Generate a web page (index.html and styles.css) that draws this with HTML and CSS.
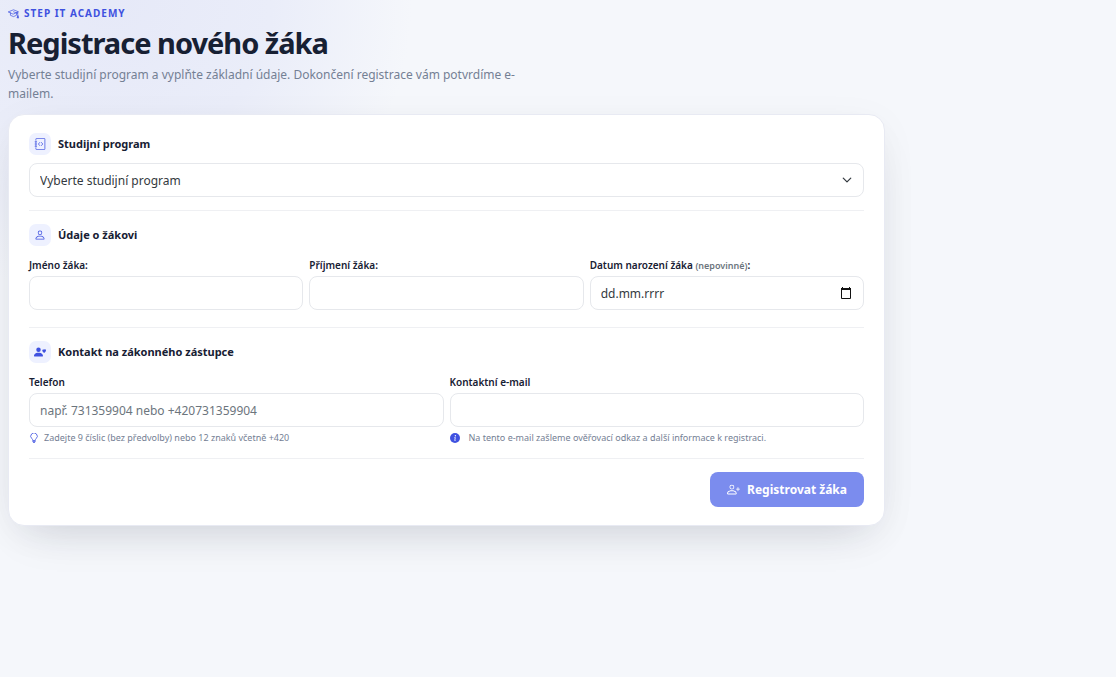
FILE: index.html
```html
<!DOCTYPE html>
<html lang="cs">
<head>
<meta charset="utf-8">
<meta name="viewport" content="width=device-width, initial-scale=1">
<title>Registrace nového žáka</title>
<link rel="stylesheet" href="styles.css">
</head>
<body>
<main class="page">
  <header class="intro">
    <p class="eyebrow">
      <svg class="eyebrow-icon" viewBox="0 0 16 16" fill="none" stroke="currentColor" stroke-linejoin="round" stroke-linecap="round" aria-hidden="true"><path d="M.8 5.5 8 2.6l7.200 2.900L8 8.700zM3.500 7v3.600L8 12.500l4.300-1.900V7M14.200 6v6M8 5.500l6 2.200"/><path d="M14.200 11.500l-1.200 2.800h2.400z" fill="currentColor"/></svg>
      STEP IT ACADEMY
    </p>
    <h1 class="title">Registrace nového žáka</h1>
    <p class="subtitle">Vyberte studijní program a vyplňte základní údaje. Dokončení registrace vám potvrdíme e-mailem.</p>
  </header>

  <form class="card">
    <section class="section section-program">
      <h2 class="section-title">
        <span class="badge"><svg viewBox="0 0 16 16" fill="none" stroke="currentColor" stroke-linecap="round" stroke-linejoin="round" aria-hidden="true"><path d="M2.500 3V1.500a1 1 0 0 1 1-1h10a1 1 0 0 1 1 1v13a1 1 0 0 1-1 1h-10a1 1 0 0 1-1-1V13M2.500 5.200v1M2.500 7.500v1M2.500 9.800v1M1.500 5h2M1.500 8h2M1.500 11h2M7.600 6 5.900 8l1.700 2M10 6l1.700 2L10 10"/></svg></span>
        <label for="program">Studijní program</label>
      </h2>
      <div class="select-wrap">
        <select class="control" id="program"><option>Vyberte studijní program</option></select>
        <svg class="chevron" viewBox="0 0 16 16" fill="none" stroke="currentColor" stroke-width="2" stroke-linecap="round" stroke-linejoin="round" aria-hidden="true"><path d="m2 5 6 6 6-6"/></svg>
      </div>
    </section>

    <section class="section section-student">
      <h2 class="section-title">
        <span class="badge"><svg viewBox="0 0 16 16" fill="currentColor" aria-hidden="true"><path d="M8 8a3 3 0 1 0 0-6 3 3 0 0 0 0 6m2-3a2 2 0 1 1-4 0 2 2 0 0 1 4 0m4 8c0 1-1 1-1 1H3s-1 0-1-1 1-4 6-4 6 3 6 4m-1-.004c-.001-.246-.154-.986-.832-1.664C11.516 10.680 10.289 10 8 10s-3.516.680-4.168 1.332c-.678.678-.830 1.418-.832 1.664z"/></svg></span>
        Údaje o žákovi
      </h2>
      <div class="fields fields-three">
        <div class="field">
          <label class="label" for="first">Jméno žáka:</label>
          <input class="control" id="first" type="text">
        </div>
        <div class="field">
          <label class="label" for="last">Příjmení žáka:</label>
          <input class="control" id="last" type="text">
        </div>
        <div class="field">
          <label class="label" for="birth">Datum narození žáka <span class="optional">(nepovinné)</span>:</label>
          <div class="control date">
            <input class="date-input" id="birth" type="text" placeholder="dd.mm.rrrr">
            <button class="date-button" type="button" aria-label="Otevřít kalendář">
              <svg viewBox="0 0 14 14" fill="none" stroke="currentColor" aria-hidden="true"><path d="M2.500 3v9.500h9V3"/><path d="M2 3h10" stroke-width="2"/><path d="M3.500 1v2M10.500 1v2"/></svg>
            </button>
          </div>
        </div>
      </div>
    </section>

    <section class="section section-contact">
      <h2 class="section-title">
        <span class="badge"><svg viewBox="0 0 16 16" fill="currentColor" aria-hidden="true"><path d="M9 5a3 3 0 1 1-6 0 3 3 0 0 1 6 0m-9 8c0 1 1 1 1 1h10s1 0 1-1-1-4-6-4-6 3-6 4m13.500-8.090c1.387-1.425 4.855 1.070 0 4.277-4.854-3.207-1.387-5.702 0-4.276Z"/></svg></span>
        Kontakt na zákonného zástupce
      </h2>
      <div class="fields">
        <div class="field">
          <label class="label" for="phone">Telefon</label>
          <input class="control" id="phone" type="tel" placeholder="např. 731359904 nebo +420731359904">
          <p class="hint">
            <svg class="hint-icon" viewBox="0 0 16 16" fill="none" stroke="currentColor" stroke-width="1.300" stroke-linecap="round" stroke-linejoin="round" aria-hidden="true"><path d="M6 11.500c0-1.200-.6-1.700-1.400-2.500a5.200 5.200 0 1 1 6.800 0c-.8.800-1.400 1.300-1.400 2.500zM6 13.400h4M7 15.300h2"/></svg>
            Zadejte 9 číslic (bez předvolby) nebo 12 znaků včetně +420
          </p>
        </div>
        <div class="field">
          <label class="label" for="email">Kontaktní e-mail</label>
          <input class="control" id="email" type="email">
          <p class="hint hint-info">
            <svg class="hint-icon" viewBox="0 0 16 16" aria-hidden="true"><circle cx="8" cy="8" r="8" fill="currentColor"/><circle cx="8.600" cy="4.300" r="1.100" fill="#fff"/><path d="M7 7.300h1.500L7.600 12h1.200" fill="none" stroke="#fff" stroke-width="1.300"/></svg>
            Na tento e-mail zašleme ověřovací odkaz a další informace k registraci.
          </p>
        </div>
      </div>
    </section>

    <div class="actions">
      <button class="submit" type="submit">
        <svg viewBox="0 0 16 16" fill="currentColor" aria-hidden="true"><path d="M6 8a3 3 0 1 0 0-6 3 3 0 0 0 0 6m2-3a2 2 0 1 1-4 0 2 2 0 0 1 4 0m4 8c0 1-1 1-1 1H1s-1 0-1-1 1-4 6-4 6 3 6 4m-1-.004c-.001-.246-.154-.986-.832-1.664C9.516 10.680 8.289 10 6 10s-3.516.680-4.168 1.332c-.678.678-.830 1.418-.832 1.664z"/><path d="M13.500 5a.5.5 0 0 1 .5.5V7h1.500a.5.5 0 0 1 0 1H14v1.500a.5.5 0 0 1-1 0V8h-1.500a.5.5 0 0 1 0-1H13V5.500a.5.5 0 0 1 .5-.5"/></svg>
        Registrovat žáka
      </button>
    </div>
  </form>
</main>
</body>
</html>
```

FILE: styles.css
```css
* {
  box-sizing: border-box;
}

body {
  margin: 0;
  min-height: 100vh;
  padding: 6px 8px;
  background: radial-gradient(ellipse 400px 400px at 112px 0, #e6e9f8 0, #eaedf9 40%, #f5f7fb 75%, rgba(245, 247, 251, 0) 100%) no-repeat #f5f7fb;
  color: #172033;
  font-family: "Segoe UI", "Noto Sans", sans-serif;
  font-size: 12px;
}

h1,
h2,
p {
  margin: 0;
}

svg {
  display: block;
  flex: none;
}

.page {
  max-width: 877px;
}

.eyebrow {
  display: flex;
  align-items: center;
  gap: 5px;
  color: #3f51e0;
  font-size: 10px;
  font-weight: 700;
  line-height: 15px;
  letter-spacing: 1px;
}

.eyebrow-icon {
  width: 11px;
  height: 11px;
}

.title {
  padding-top: 3px;
  font-size: 29px;
  font-weight: 700;
  line-height: 38px;
  letter-spacing: -1px;
}

.subtitle {
  max-width: 520px;
  padding: 3px 0 11px;
  color: #748094;
  font-size: 12px;
  line-height: 19px;
}

.card {
  padding: 18px 20px;
  border: 1px solid #e8eaf3;
  border-radius: 16px;
  background: #fff;
  box-shadow: 0 20px 44px -20px rgba(23, 32, 51, 0.18), 0 8px 40px rgba(23, 32, 51, 0.04);
}

.section {
  padding-bottom: 13px;
  border-bottom: 1px solid #eff0f3;
}

.section + .section {
  padding-top: 13px;
}

.section-student {
  padding-bottom: 17px;
}

.section-title {
  display: flex;
  align-items: center;
  gap: 7px;
  font-size: 11px;
  font-weight: 700;
  line-height: 22px;
}

.badge {
  display: grid;
  place-items: center;
  width: 22px;
  height: 22px;
  border-radius: 7px;
  background: #eef1ff;
  color: #3f51e0;
}

.badge svg {
  width: 12px;
  height: 12px;
}

.select-wrap {
  display: grid;
  align-items: center;
  margin-top: 8px;
}

.select-wrap > * {
  grid-area: 1 / 1;
}

.control {
  width: 100%;
  height: 34px;
  padding: 0 10px;
  border: 1px solid #e6e8ec;
  border-radius: 8px;
  appearance: none;
  background: #fff;
  color: #343a40;
  font: inherit;
}

.control::placeholder {
  color: #6c757d;
  opacity: 1;
}

.chevron {
  justify-self: end;
  width: 10px;
  height: 10px;
  margin-right: 12px;
  color: #343a40;
  pointer-events: none;
}

.fields {
  display: grid;
  grid-template-columns: repeat(2, 1fr);
  gap: 6px;
  padding-top: 11px;
}

.fields-three {
  grid-template-columns: repeat(3, 1fr);
}

.field {
  display: flex;
  flex-direction: column;
  min-width: 0;
}

.label {
  padding-bottom: 3px;
  font-size: 10px;
  font-weight: 600;
  line-height: 16px;
}

.optional {
  color: #6c757d;
  font-size: 9px;
  line-height: 1;
}

.date {
  display: flex;
  align-items: center;
}

.date-input {
  flex: 1;
  min-width: 0;
  padding: 0;
  border: 0;
  background: none;
  color: inherit;
  font: inherit;
}

.date-input::placeholder {
  color: #343a40;
  opacity: 1;
}

.date-button {
  padding: 0;
  border: 0;
  background: none;
  color: #111;
}

.date-button svg {
  width: 14px;
  height: 14px;
}

.hint {
  display: flex;
  align-items: center;
  gap: 5px;
  padding-top: 4px;
  color: #748094;
  font-size: 9px;
  line-height: 14px;
}

.hint-info {
  gap: 9px;
}

.hint-icon {
  width: 10px;
  height: 10px;
  color: #3f51e0;
}

.actions {
  display: flex;
  justify-content: flex-end;
  padding-top: 13px;
}

.submit {
  display: flex;
  align-items: center;
  gap: 7px;
  height: 35px;
  padding: 0 17px;
  border: 0;
  border-radius: 8px;
  background: #7b8cee;
  color: #fff;
  font: inherit;
  font-weight: 700;
}

.submit svg {
  width: 13px;
  height: 13px;
}

@media (max-width: 640px) {
  .fields {
    grid-template-columns: 1fr;
  }
}
```
